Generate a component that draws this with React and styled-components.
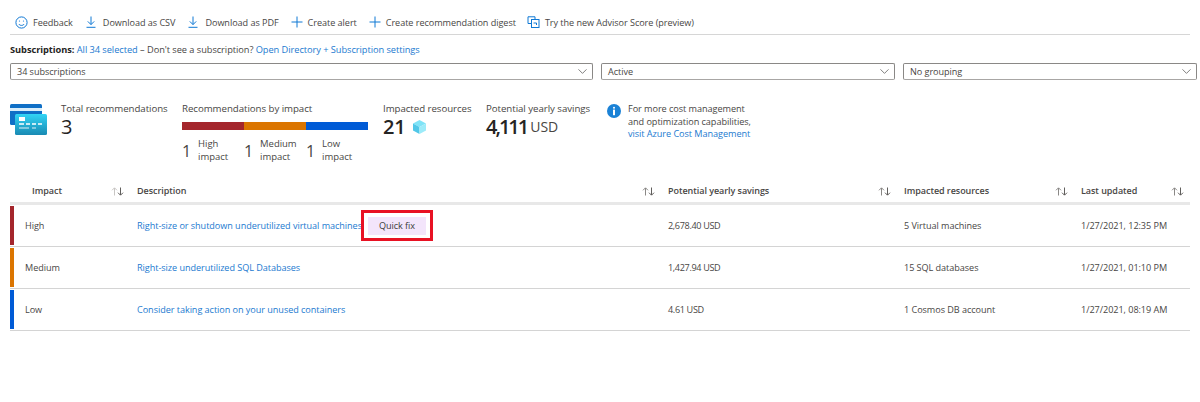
import React from "react";
import styled, { createGlobalStyle } from "styled-components";
import { ChevronDown } from "lucide-react";

const Global = createGlobalStyle`
  html, body { margin: 0; padding: 0; background: #fff; }
  body { font-family: "Open Sans", "Noto Sans", sans-serif; color: #323130; }
  * { box-sizing: border-box; }
`;

const Page = styled.div`
  width: 1200px;
  height: 402px;
  overflow: hidden;
  padding: 0 3px 0 10px;
  font-size: 9.1px;
  letter-spacing: -0.05px;
`;

const Toolbar = styled.div`
  display: flex;
  align-items: center;
  height: 35px;
  width: 1180px;
  padding: 10px 0 0 5px;
  border-bottom: 1px solid #d6d6d6;
`;

const ToolItem = styled.div`
  display: flex;
  align-items: center;
  gap: ${({ $gap }) => $gap || 7}px;
  margin-right: ${({ $mr }) => $mr || 13}px;
  color: #484644;
  white-space: nowrap;
  svg { flex: none; display: block; }
`;

const SubLine = styled.div`
  height: 28px;
  padding-top: 8px;
  font-size: 9.25px;
  line-height: 14px;
  color: #484644;
  b { font-weight: 700; color: #252423; }
`;

const Link = styled.span`
  color: #1b7ad0;
`;

const Filters = styled.div`
  display: grid;
  grid-template-columns: 583px 294px 294px;
  gap: 8px;
`;

const Select = styled.div`
  height: 17px;
  display: flex;
  align-items: center;
  justify-content: space-between;
  padding: 0 2px 0 6px;
  border: 1px solid #8a8886;
  border-bottom-color: #a8a6a4;
  border-radius: 2px;
  color: #484644;
  svg { color: #484644; }
`;

const Summary = styled.div`
  display: flex;
  height: 97px;
  padding-top: 21px;
`;

const Card = styled.div`
  width: ${({ $w }) => $w}px;
  flex: none;
`;

const CardIcon = styled.div`
  width: 51px;
  flex: none;
  padding-top: 3px;
  svg { display: block; }
`;

const Label = styled.div`
  line-height: 15px;
  height: 15px;
  font-size: 9.7px;
  color: #484644;
  white-space: nowrap;
`;

const Big = styled.div`
  display: flex;
  align-items: center;
  gap: ${({ $gap }) => $gap || 0}px;
  font-size: 20px;
  line-height: 22px;
  color: #252423;
  letter-spacing: ${({ $tight }) => ($tight ? -2 : -0.3)}px;
  font-weight: ${({ $heavy }) => ($heavy ? 600 : 400)};
  svg { display: block; }
`;

const Unit = styled.span`
  font-size: 14px;
  font-weight: 400;
  color: #484644;
  margin-left: 3px;
  letter-spacing: 0;
`;

const ImpactBar = styled.div`
  display: grid;
  grid-template-columns: 62px 62px 62px;
  height: 8px;
  margin-top: 6px;
`;

const Segment = styled.div`
  background: ${({ $c }) => $c};
`;

const ImpactCounts = styled.div`
  display: grid;
  grid-template-columns: 62px 62px 62px;
  margin-top: 8px;
`;

const Count = styled.div`
  display: flex;
  gap: 7px;
  align-items: center;
  font-size: 16px;
  color: #484644;
  span {
    font-size: 9.5px;
    line-height: 12.5px;
  }
`;

const Note = styled.div`
  display: flex;
  gap: 7px;
  padding-top: 2px;
  font-size: 9.15px;
  line-height: 12.5px;
  color: #484644;
  white-space: nowrap;
  svg { flex: none; margin-top: 1px; }
`;

const Columns = "127px 531px 236px 177px 109px";

const HeadRow = styled.div`
  display: grid;
  grid-template-columns: ${Columns};
  width: 1180px;
  height: 14px;
  margin-top: 7px;
  line-height: 14px;
  color: #484644;
`;

const HeadCell = styled.div`
  display: flex;
  align-items: center;
  justify-content: space-between;
  padding-left: ${({ $pl }) => $pl || 0}px;
  padding-right: ${({ $pr }) => $pr || 13}px;
  font-weight: 600;
  font-size: 9px;
  svg { display: block; }
`;

const HeadRule = styled.div`
  width: 1180px;
  height: 3px;
  margin-top: 4px;
  background: #e8e8e8;
`;

const Row = styled.div`
  display: grid;
  grid-template-columns: ${Columns};
  align-items: center;
  width: 1180px;
  height: 42px;
  border-bottom: 1px solid #d4d4d4;
  color: #484644;
  white-space: nowrap;
`;

const ImpactCell = styled.div`
  height: calc(100% - 2px);
  padding-left: 11px;
  display: flex;
  align-items: center;
  border-left: 4px solid ${({ $c }) => $c};
`;

const DescCell = styled.div`
  display: flex;
  align-items: center;
`;

const SavingsCell = styled.div`
  letter-spacing: -0.35px;
`;

const Highlight = styled.div`
  width: 72px;
  height: 31px;
  margin-left: -1px;
  border: 3px solid #e81123;
  display: flex;
  align-items: center;
  justify-content: center;
`;

const QuickFix = styled.div`
  width: 58px;
  height: 18px;
  line-height: 18px;
  text-align: center;
  background: #f3e5fb;
  color: #3b3a39;
`;

const Smile = () => (
  <svg width="13" height="13" viewBox="0 0 13 13" fill="none" stroke="#0f78d4" strokeWidth="1">
    <circle cx="6.5" cy="6.5" r="5.6" />
    <circle cx="4.5" cy="5" r=".6" fill="#0f78d4" stroke="none" />
    <circle cx="8.5" cy="5" r=".6" fill="#0f78d4" stroke="none" />
    <path d="M3.8 8c.7 1 1.6 1.4 2.7 1.4S8.500 9 9.200 8" />
  </svg>
);

const Download = () => (
  <svg width="10" height="12" viewBox="0 0 10 12" fill="none" stroke="#0f78d4" strokeWidth="1">
    <path d="M5 .5v8M1.800 5.400 5 8.600l3.200-3.200M.5 11.300h9" />
  </svg>
);

const Plus = () => (
  <svg width="12" height="12" viewBox="0 0 12 12" fill="none" stroke="#0f78d4" strokeWidth="1">
    <path d="M6 .5v11M.5 6h11" />
  </svg>
);

const Copy = () => (
  <svg width="13" height="12" viewBox="0 0 13 12" fill="none" stroke="#0f78d4" strokeWidth="1">
    <path d="M8 3V.8H1V7.500h3" />
    <rect x="4.500" y="3.500" width="7.500" height="8" />
    <path d="M6.500 7h3v2" />
  </svg>
);

const CardsIcon = () => (
  <svg width="37" height="31" viewBox="0 0 37 31">
    <defs>
      <linearGradient id="front" x1="0" y1="0" x2="0" y2="1">
        <stop offset="0" stopColor="#32d4f5" />
        <stop offset="1" stopColor="#198ab3" />
      </linearGradient>
    </defs>
    <rect x="0" y="0" width="32" height="21" rx="1.500" fill="#0f6fc6" />
    <rect x="0" y="4" width="32" height="3" fill="#d9eefb" />
    <rect x="5" y="10" width="32" height="21" rx="1.500" fill="url(#front)" />
    <rect x="9" y="13" width="6" height="4" fill="#fff" />
    <path d="M9 20h5M16 20h4M22 20h4M28 20h4" stroke="#fff" strokeWidth="1.300" />
    <path d="M9 24h10M22 24h4" stroke="#fff" strokeWidth="1" opacity=".85" />
  </svg>
);

const Cube = () => (
  <svg width="13" height="14" viewBox="0 0 13 14">
    <path d="M6.500 0 13 3.500 6.500 7 0 3.500z" fill="#7fe3f7" />
    <path d="M0 3.500 6.500 7v7L0 10.500z" fill="#50c7e8" />
    <path d="M13 3.500 6.500 7v7l6.500-3.500z" fill="#9cebf9" />
  </svg>
);

const Info = () => (
  <svg width="14" height="14" viewBox="0 0 14 14">
    <circle cx="7" cy="7" r="7" fill="#1b82d6" />
    <circle cx="7" cy="3.700" r="1" fill="#fff" />
    <rect x="6" y="5.600" width="2" height="5.600" fill="#fff" />
  </svg>
);

const Sort = ({ dim }) => (
  <svg width="13" height="9" viewBox="0 0 13 9" fill="none" strokeWidth="1">
    <path d="M3.500 8.500V1M1 3.300 3.500.8 6 3.300" stroke={dim ? "#c8c6c4" : "#8a8886"} />
    <path d="M9.500.5V8M7 5.700 9.500 8.200 12 5.700" stroke="#605e5c" />
  </svg>
);

const tools = [
  { icon: <Smile />, text: "Feedback", gap: 5, mr: 13 },
  { icon: <Download />, text: "Download as CSV", gap: 7, mr: 13 },
  { icon: <Download />, text: "Download as PDF", gap: 7, mr: 12 },
  { icon: <Plus />, text: "Create alert", gap: 5, mr: 12 },
  { icon: <Plus />, text: "Create recommendation digest", gap: 5, mr: 11 },
  { icon: <Copy />, text: "Try the new Advisor Score (preview)", gap: 5, mr: 0 }
];

const impacts = [
  { n: 1, top: "High", c: "#a4262c" },
  { n: 1, top: "Medium", c: "#db7500" },
  { n: 1, top: "Low", c: "#005bd6" }
];

const rows = [
  {
    impact: "High",
    c: "#a4262c",
    desc: "Right-size or shutdown underutilized virtual machines",
    fix: true,
    savings: "2,678.40 USD",
    res: "5 Virtual machines",
    updated: "1/27/2021, 12:35 PM"
  },
  {
    impact: "Medium",
    c: "#db7500",
    desc: "Right-size underutilized SQL Databases",
    savings: "1,427.94 USD",
    res: "15 SQL databases",
    updated: "1/27/2021, 01:10 PM"
  },
  {
    impact: "Low",
    c: "#005bd6",
    desc: "Consider taking action on your unused containers",
    savings: "4.61 USD",
    res: "1 Cosmos DB account",
    updated: "1/27/2021, 08:19 AM"
  }
];

function App() {
  return (
    <Page>
      <Global />
      <Toolbar>
        {tools.map(t => (
          <ToolItem key={t.text} $gap={t.gap} $mr={t.mr}>
            {t.icon}
            {t.text}
          </ToolItem>
        ))}
      </Toolbar>
      <SubLine>
        <b>Subscriptions:</b> <Link>All 34 selected</Link> – Don't see a subscription?{" "}
        <Link>Open Directory + Subscription settings</Link>
      </SubLine>
      <Filters>
        {["34 subscriptions", "Active", "No grouping"].map(label => (
          <Select key={label}>
            {label}
            <ChevronDown size={15} strokeWidth={1.1} />
          </Select>
        ))}
      </Filters>
      <Summary>
        <CardIcon>
          <CardsIcon />
        </CardIcon>
        <Card $w={121}>
          <Label>Total recommendations</Label>
          <Big>3</Big>
        </Card>
        <Card $w={201}>
          <Label>Recommendations by impact</Label>
          <ImpactBar>
            {impacts.map(i => (
              <Segment key={i.top} $c={i.c} />
            ))}
          </ImpactBar>
          <ImpactCounts>
            {impacts.map(i => (
              <Count key={i.top}>
                {i.n}
                <span>
                  {i.top}
                  <br />
                  impact
                </span>
              </Count>
            ))}
          </ImpactCounts>
        </Card>
        <Card $w={103}>
          <Label>Impacted resources</Label>
          <Big $gap={8} $heavy>
            21 <Cube />
          </Big>
        </Card>
        <Card $w={121}>
          <Label>Potential yearly savings</Label>
          <Big $heavy $tight>
            4,111<Unit>USD</Unit>
          </Big>
        </Card>
        <Note>
          <Info />
          <div>
            For more cost management
            <br />
            and optimization capabilities,
            <br />
            <Link>visit Azure Cost Management</Link>
          </div>
        </Note>
      </Summary>
      <HeadRow>
        <HeadCell $pl={22}>
          Impact
          <Sort dim />
        </HeadCell>
        <HeadCell>
          Description
          <Sort />
        </HeadCell>
        <HeadCell>
          Potential yearly savings
          <Sort />
        </HeadCell>
        <HeadCell>
          Impacted resources
          <Sort />
        </HeadCell>
        <HeadCell $pr={6}>
          Last updated
          <Sort />
        </HeadCell>
      </HeadRow>
      <HeadRule />
      {rows.map(r => (
        <Row key={r.impact}>
          <ImpactCell $c={r.c}>{r.impact}</ImpactCell>
          <DescCell>
            <Link>{r.desc}</Link>
            {r.fix && (
              <Highlight>
                <QuickFix>Quick fix</QuickFix>
              </Highlight>
            )}
          </DescCell>
          <SavingsCell>{r.savings}</SavingsCell>
          <div>{r.res}</div>
          <div>{r.updated}</div>
        </Row>
      ))}
    </Page>
  );
}

export default App;
